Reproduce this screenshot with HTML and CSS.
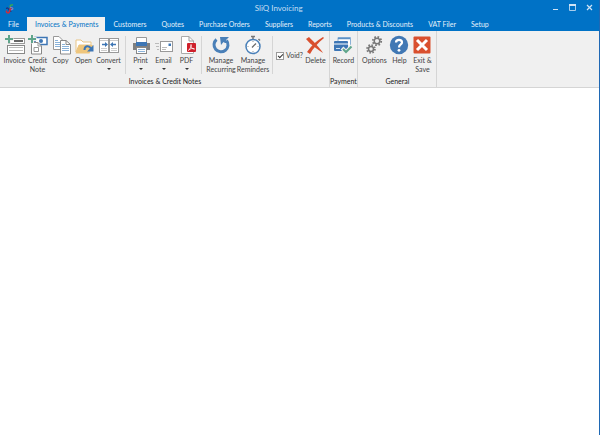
FILE: index.html
```html
<!DOCTYPE html>
<html lang="en">
<head>
    <meta charset="UTF-8">
    <meta name="viewport" content="width=device-width, initial-scale=1.0">
    <title>SliQ Invoicing</title>
    <link rel="stylesheet" href="styles.css">
</head>
<body>
    <header class="titlebar">
        <svg class="logo" viewBox="0 0 10 10">
            <path d="M8 1C5.500 .5 4.500 2 5.500 3.500" fill="none" stroke="#3cae4a" stroke-width="1.300"/>
            <path d="M5 3.500C9 3 8.500 6.500 5.500 5.500" fill="none" stroke="#8f7ab8" stroke-width="1.200"/>
            <path d="M1.500 5C1.500 3.500 3 3.500 3.500 5S6 7 6 8" fill="none" stroke="#22337c" stroke-width="1.300"/>
            <path d="M1.500 6.500C1 9.500 4 9.500 4.500 7.500L5.500 4" fill="none" stroke="#d22b3b" stroke-width="1.500"/>
        </svg>
        <h1>SliQ Invoicing</h1>
        <div class="window-buttons">
            <button aria-label="Minimize"><svg viewBox="0 0 7 7"><path d="M1 5.500H6" stroke="#cfe3f5"/></svg></button>
            <button aria-label="Maximize"><svg viewBox="0 0 7 7"><path d="M.5 1.500V6.500H6.500V1.500" fill="none" stroke="#a9cdec"/><path d="M0 1H7" stroke="#cfe3f5" stroke-width="2"/></svg></button>
            <button aria-label="Close"><svg viewBox="0 0 7 7"><path d="M1 1L6 6M6 1L1 6" stroke="#cfe3f5" stroke-width="1.200"/></svg></button>
        </div>
    </header>

    <nav class="tabs">
        <button>File</button>
        <button class="active">Invoices &amp; Payments</button>
        <button>Customers</button>
        <button>Quotes</button>
        <button>Purchase Orders</button>
        <button>Suppliers</button>
        <button>Reports</button>
        <button>Products &amp; Discounts</button>
        <button>VAT Filer</button>
        <button>Setup</button>
    </nav>

    <div class="ribbon">
        <section class="group">
            <div class="items">
                <button class="tool">
                    <svg viewBox="0 0 20 20">
                        <rect x="3.500" y="3.500" width="16" height="5" fill="#fff" stroke="#999"/>
                        <path d="M9 6H18" stroke="#666" stroke-width="2"/>
                        <rect x="2.500" y="10.500" width="17" height="8" fill="#fff" stroke="#888"/>
                        <path d="M4 12.500H18M4 15.500H18" stroke="#bbb"/>
                        <path d="M4 0V8.500M0 4H8.500" stroke="#f0f0f0" stroke-width="4"/>
                        <path d="M4 0V8M0 4H8" stroke="#5fa58b" stroke-width="2"/>
                    </svg>
                    <span>Invoice</span>
                </button>
                <button class="tool">
                    <svg viewBox="0 0 20 20">
                        <rect x="7" y="2.500" width="12" height="7" fill="#fff" stroke="#3d76b5" stroke-width="1.500"/>
                        <circle cx="13" cy="6" r="2" fill="#3d76b5"/>
                        <path d="M3.500 7.500H10L13.500 11V19H3.500Z" fill="#fff" stroke="#888"/>
                        <path d="M10 7.500V11H13.500M6 12.500H10.500V16.500H6Z" fill="none" stroke="#999"/>
                        <path d="M4 0V8.500M0 4H8.500" stroke="#f0f0f0" stroke-width="4"/>
                        <path d="M4 0V8M0 4H8" stroke="#5fa58b" stroke-width="2"/>
                    </svg>
                    <span>Credit<br>Note</span>
                </button>
                <button class="tool">
                    <svg viewBox="0 0 20 20">
                        <path d="M2.500 1.500H8L11.500 5V14.500H2.500Z" fill="#fff" stroke="#999"/>
                        <path d="M4 5.500H7M4 7.500H9M4 9.500H9M4 11.500H9" stroke="#8ab3da"/>
                        <path d="M9.500 5.500H15L19.500 9.500V19H9.500Z" fill="#fff" stroke="#888"/>
                        <path d="M15 5.500V9.500H19.500" fill="none" stroke="#888"/>
                        <path d="M11 9.500H14M11 11.500H18M11 13.500H18M11 15.500H18" stroke="#8ab3da"/>
                    </svg>
                    <span>Copy</span>
                </button>
                <button class="tool">
                    <svg viewBox="0 0 20 20">
                        <path d="M2 17V5H7L9 7H17V10H5Z" fill="#fff" stroke="#e9c586"/>
                        <path d="M1.500 18.500L5 10H19L15.500 18.500Z" fill="#efc67c"/>
                        <path d="M10.500 15C10.500 10.500 15 10 17 13.500" fill="none" stroke="#3d76b5" stroke-width="2"/>
                        <path d="M19.500 10V16.500H13Z" fill="#3d76b5"/>
                    </svg>
                    <span>Open</span>
                </button>
                <button class="tool medium">
                    <svg viewBox="0 0 20 20">
                        <rect x=".5" y="3.500" width="9" height="14" fill="#fff" stroke="#999"/>
                        <rect x="10.500" y="3.500" width="9" height="14" fill="#fff" stroke="#999"/>
                        <path d="M1 5.500H9M11 5.500H19M2 13.500H8M2 15.500H8M12 13.500H18M12 15.500H18" stroke="#ccc"/>
                        <path d="M3 9.500H7M13 9.500H17" stroke="#3d76b5" stroke-width="1.500"/>
                        <path d="M6 7L9 9.500L6 12ZM14 7L11 9.500L14 12Z" fill="#3d76b5"/>
                    </svg>
                    <span>Convert</span><i class="arrow"></i>
                </button>
                <hr>
                <button class="tool">
                    <svg viewBox="0 0 20 20">
                        <path d="M5.500 9V2.500H15.500V9" fill="#fff" stroke="#999"/>
                        <path d="M2 8H19V15H2Z" fill="#808080"/>
                        <rect x="5" y="7" width="11" height="4" fill="#3d76b5"/>
                        <rect x="5.500" y="12.500" width="10" height="6" fill="#fff" stroke="#888"/>
                        <path d="M7 14.500H14M7 16.500H14" stroke="#8ab3da"/>
                    </svg>
                    <span>Print</span><i class="arrow"></i>
                </button>
                <button class="tool">
                    <svg viewBox="0 0 20 20">
                        <rect x="6.500" y="6.500" width="12" height="10" fill="#fff" stroke="#999"/>
                        <path d="M14.500 8.500H17V11H14.500Z" fill="#3d76b5"/>
                        <path d="M8 12.500H13M8 14.500H12M1 8.500H5M2 11.500H5M3 14.500H5" stroke="#bbb"/>
                    </svg>
                    <span>Email</span><i class="arrow"></i>
                </button>
                <button class="tool">
                    <svg viewBox="0 0 20 20">
                        <path d="M4.500 1.500H12L16.500 6V18.500H4.500Z" fill="#fff" stroke="#aaa"/>
                        <path d="M12 1.500V6H16.500" fill="none" stroke="#999"/>
                        <rect x="10" y="8" width="9" height="9" rx="1" fill="#cf202b"/>
                        <path d="M11.500 15.500C13.500 13 14.500 11 14 9.500C13.500 12 15 14 17.500 14C15.500 13 13 13.500 11.500 15.500Z" fill="none" stroke="#fff" stroke-width=".8"/>
                    </svg>
                    <span>PDF</span><i class="arrow"></i>
                </button>
                <hr>
                <button class="tool wide">
                    <svg viewBox="0 0 20 20">
                        <path d="M5.500 4.500A7 7 0 1 0 15.500 5.500" fill="none" stroke="#4a80b8" stroke-width="3"/>
                        <path d="M9 2H18L15 5L17 8L14 8L12.500 7L10 10Z" fill="#4a80b8"/>
                    </svg>
                    <span>Manage<br>Recurring</span>
                </button>
                <button class="tool wide">
                    <svg viewBox="0 0 20 20">
                        <path d="M8 1.500H12M10 1V4M15.500 4L17 5.500" stroke="#777" stroke-width="1.500"/>
                        <circle cx="10" cy="11.500" r="7" fill="#fff" stroke="#4a80b8" stroke-width="1.500"/>
                        <path d="M9 12.500L13 8.500" stroke="#666" stroke-width="1.200"/>
                        <path d="M10 6V7M15.500 11.500H14.500M10 17V16M4.500 11.500H5.500" stroke="#999"/>
                    </svg>
                    <span>Manage<br>Reminders</span>
                </button>
                <hr>
                <label class="void"><input type="checkbox" checked>Void?</label>
                <button class="tool">
                    <svg viewBox="0 0 20 20">
                        <path d="M1 4L4 2C8 6 15 13 18 18C12 14 6 10 1 4Z" fill="#d9502f"/>
                        <path d="M18 2L19 3C13 8 8 13 5 19L2 17C6 11 11 6 18 2Z" fill="#d9502f"/>
                    </svg>
                    <span>Delete</span>
                </button>
            </div>
            <h2>Invoices &amp; Credit Notes</h2>
        </section>

        <section class="group narrow">
            <div class="items">
                <button class="tool medium">
                    <svg viewBox="0 0 20 20">
                        <path d="M5 6V2.500H17.500V11" fill="#fff" stroke="#8ab0d6"/>
                        <path d="M5 3.500H17" stroke="#5d91c5" stroke-width="1.500"/>
                        <rect x="1" y="6" width="14" height="10" rx="1" fill="#3d76b5"/>
                        <path d="M1 9H15" stroke="#fff"/>
                        <path d="M3 13.500H7" stroke="#cfe0f0"/>
                        <path d="M9 13L13 17L19 11" fill="none" stroke="#f0f0f0" stroke-width="4"/>
                        <path d="M10 14L13 17L18.500 11.500" fill="none" stroke="#5fa58b" stroke-width="2"/>
                    </svg>
                    <span>Record</span>
                </button>
            </div>
            <h2>Payment</h2>
        </section>

        <section class="group">
            <div class="items">
                <button class="tool medium">
                    <svg viewBox="0 0 20 20" fill="none" stroke="#777">
                        <circle cx="13" cy="6" r="2.800" stroke-width="1.500"/>
                        <circle cx="13" cy="6" r="4.200" stroke-width="1.800" stroke-dasharray="1.650 1.650"/>
                        <circle cx="7" cy="14" r="2.500" stroke-width="1.500"/>
                        <circle cx="7" cy="14" r="3.900" stroke-width="1.800" stroke-dasharray="1.530 1.530"/>
                    </svg>
                    <span>Options</span>
                </button>
                <button class="tool">
                    <svg viewBox="0 0 20 20">
                        <circle cx="10" cy="10" r="9.200" fill="#4178b4"/>
                        <path d="M7 7.500C7 4 13 4 13 7.500C13 9.500 10 9.500 10 12.500" fill="none" stroke="#fff" stroke-width="2.200"/>
                        <circle cx="10" cy="15.300" r="1.400" fill="#fff"/>
                    </svg>
                    <span>Help</span>
                </button>
                <button class="tool">
                    <svg viewBox="0 0 20 20">
                        <rect x="1.500" y="1.500" width="17" height="17" rx="1" fill="#d9502f"/>
                        <path d="M5 5L15 15M15 5L5 15" stroke="#fff" stroke-width="3"/>
                    </svg>
                    <span>Exit &amp;<br>Save</span>
                </button>
            </div>
            <h2>General</h2>
        </section>
    </div>

    <main class="workspace"></main>
</body>
</html>
```

FILE: styles.css
```css
* {
    box-sizing: border-box;
}

body {
    margin: 0;
    min-height: 100vh;
    display: flex;
    flex-direction: column;
    border-right: 1px solid #1f68b4;
    background: #fff;
    font-family: "Lato", "Noto Sans", sans-serif;
    font-size: 7px;
    line-height: 9px;
    color: #444;
}

button {
    margin: 0;
    padding: 0;
    border: none;
    background: none;
    font: inherit;
    color: inherit;
}

h1, h2 {
    margin: 0;
    font-weight: normal;
}

.titlebar {
    display: grid;
    grid-template-columns: 6fr auto 7fr;
    align-items: center;
    height: 17px;
    padding: 0 5px;
    background: #0072c6;
    color: #c5dff3;
}

.titlebar h1 {
    font-size: 8px;
    line-height: 17px;
}

.logo {
    width: 10px;
    height: 10px;
}

.window-buttons {
    display: flex;
    justify-content: flex-end;
    gap: 10px;
    padding: 0 1px 2px 0;
}

.window-buttons svg {
    display: block;
    width: 7px;
    height: 7px;
}

.tabs {
    display: flex;
    height: 14px;
    background: #0072c6;
    color: #e6f1fa;
}

.tabs button {
    padding: 0 7px 0 8px;
    white-space: nowrap;
}

.tabs .active {
    background: #f0f0f0;
    color: #0072c6;
}

.tabs button:first-child {
    padding-right: 8px;
}

.ribbon {
    display: flex;
    height: 57px;
    border-bottom: 1px solid #d5d5d5;
    background: #f0f0f0;
}

.group {
    display: flex;
    flex-direction: column;
    justify-content: space-between;
    padding: 4px 2px 0 3px;
    border-right: 1px solid #d5d5d5;
}

.group.narrow {
    padding-left: 0;
    padding-right: 0;
}

.group h2 {
    padding-bottom: 1px;
    font-size: 7px;
    text-align: center;
    color: #222;
}

.items {
    display: flex;
    justify-content: center;
    align-items: flex-start;
}

.items hr {
    width: 1px;
    height: 38px;
    margin: 1px 3px 0;
    border: none;
    background: #d5d5d5;
}

.tool {
    display: flex;
    flex-direction: column;
    align-items: center;
    width: 23px;
    white-space: nowrap;
}

.tool.medium {
    width: 27px;
}

.tool.wide {
    width: 32px;
}

.tool svg {
    width: 20px;
    height: 20px;
    margin-bottom: 1px;
}

.arrow {
    margin-top: 3px;
    border: 2px solid transparent;
    border-top-color: #333;
}

.void {
    display: flex;
    align-items: center;
    gap: 2px;
    margin: 16px 1px 0 0;
}

.void input {
    appearance: none;
    width: 8px;
    height: 8px;
    margin: 0;
    border: 1px solid #999;
    background: #fff;
}

.void input:checked::after {
    content: "";
    display: block;
    width: 4px;
    height: 2px;
    margin: 1px;
    border: solid #333;
    border-width: 0 0 1px 1px;
    transform: rotate(-45deg);
}

.workspace {
    flex: 1;
}
```
